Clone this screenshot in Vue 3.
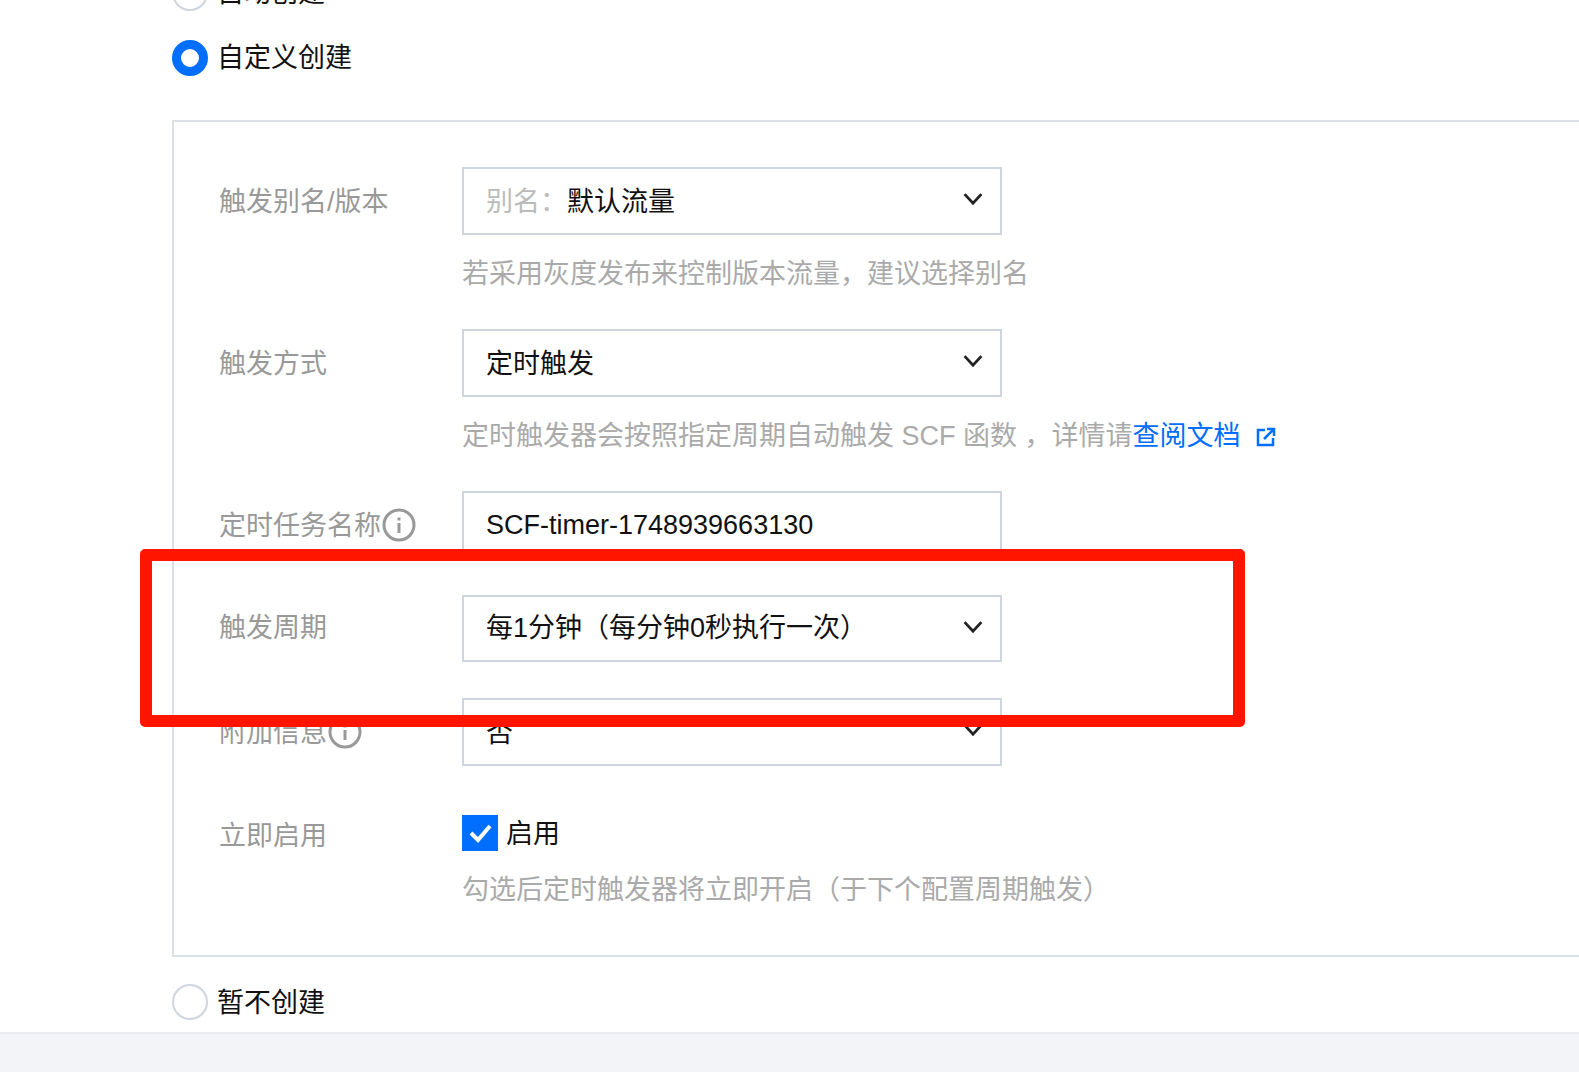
<script setup>
const chevron = 'M1 1.5 L7 8 L13 1.5'
</script>

<template>
  <div class="page">
    <main class="panel">
      <label class="radio-line first"><span class="radio"></span><span class="radio-text">自动创建</span></label>
      <label class="radio-line second"><span class="radio on"></span><span class="radio-text">自定义创建</span></label>

      <section class="box">
        <div class="row">
          <div class="label">触发别名/版本</div>
          <div class="control">
            <div class="select">
              <span><span class="prefix">别名：</span>默认流量</span>
              <svg class="chev" viewBox="0 0 14 10"><path :d="chevron" /></svg>
            </div>
            <p class="help">若采用灰度发布来控制版本流量，建议选择别名</p>
          </div>
        </div>

        <div class="row">
          <div class="label">触发方式</div>
          <div class="control">
            <div class="select">
              <span>定时触发</span>
              <svg class="chev" viewBox="0 0 14 10"><path :d="chevron" /></svg>
            </div>
            <p class="help">
              定时触发器会按照指定周期自动触发 SCF 函数 ，详情请<a class="link">查阅文档</a>
              <svg class="ext" viewBox="0 0 20 20"><path d="M9 3 H2 V18 H17 V11 M8 12 L17.500 2.500 M11 2 H18 V9" /></svg>
            </p>
          </div>
        </div>

        <div class="row">
          <div class="label">定时任务名称<svg class="info" viewBox="0 0 34 34"><circle cx="17" cy="17" r="15" /><path d="M17 9.500 V12.500 M17 15 V25" /></svg></div>
          <div class="control">
            <div class="select input"><span>SCF-timer-1748939663130</span></div>
          </div>
        </div>

        <div class="row row-tight">
          <div class="label">触发周期</div>
          <div class="control">
            <div class="select">
              <span>每1分钟（每分钟0秒执行一次）</span>
              <svg class="chev" viewBox="0 0 14 10"><path :d="chevron" /></svg>
            </div>
          </div>
        </div>

        <div class="row">
          <div class="label">附加信息<svg class="info" viewBox="0 0 34 34"><circle cx="17" cy="17" r="15" /><path d="M17 9.500 V12.500 M17 15 V25" /></svg></div>
          <div class="control">
            <div class="select">
              <span>否</span>
              <svg class="chev" viewBox="0 0 14 10"><path :d="chevron" /></svg>
            </div>
          </div>
        </div>

        <div class="row check-row">
          <div class="label">立即启用</div>
          <div class="control">
            <label class="check-line">
              <span class="check"><svg viewBox="0 0 36 36"><path d="M9 18 L16 25 L28 11" /></svg></span>
              <span class="check-text">启用</span>
            </label>
            <p class="help">勾选后定时触发器将立即开启（于下个配置周期触发）</p>
          </div>
        </div>
      </section>

      <label class="radio-line third"><span class="radio"></span><span class="radio-text">暂不创建</span></label>
    </main>
    <footer class="foot"></footer>
    <div class="highlight"></div>
  </div>
</template>

<style>
html, body { margin: 0; background: #fff; overflow: hidden; }
</style>

<style scoped>
.page {
  position: relative;
  width: 1579px;
  height: 1072px;
  overflow: hidden;
  background: #fff;
  font-family: "Liberation Sans", "Noto Sans CJK SC", sans-serif;
  font-size: 27px;
  color: #111;
}
.panel {
  display: flow-root;
  height: 1032px;
  padding-left: 172px;
  box-sizing: border-box;
}
.first { margin-top: -25px; }
.foot {
  height: 40px;
  border-top: 2px solid #e9ebf0;
  background: #f3f4f7;
  box-sizing: border-box;
}
.radio-line {
  display: flex;
  align-items: center;
  gap: 9px;
  height: 36px;
  line-height: 36px;
}
.third .radio-text { padding-top: 1px; }
.second { margin-top: 29px; }
.third { margin-top: 27px; }
.radio {
  flex: none;
  width: 36px;
  height: 36px;
  box-sizing: border-box;
  border: 2px solid #cfd5de;
  border-radius: 50%;
  background: #fff;
}
.radio.on { border: 9px solid #006eff; }
.box {
  box-sizing: border-box;
  width: 1500px;
  height: 837px;
  margin-top: 44px;
  padding: 45px 0 0 45px;
  border: 2px solid #dcdfe4;
}
.row {
  display: flex;
  margin-bottom: 36px;
}
.label {
  flex: none;
  width: 243px;
  height: 68px;
  box-sizing: border-box;
  padding-bottom: 4px;
  display: flex;
  align-items: center;
  color: #999;
}
.select {
  width: 540px;
  height: 68px;
  box-sizing: border-box;
  padding: 0 17px 4px 22px;
  border: 2px solid #cfd5de;
  display: flex;
  align-items: center;
  justify-content: space-between;
  background: #fff;
}
.input { padding-bottom: 0; }
.row-tight .select { height: 67px; padding-bottom: 6px; }
.row-tight .chev { margin-top: 3px; }
.row-tight .label { height: 67px; padding-bottom: 6px; }
.prefix { color: #bbb; }
.chev { width: 20px; height: 14px; fill: none; stroke: #222; stroke-width: 2; }
.help {
  margin: 19px 0 -1px;
  line-height: 40px;
  color: #aaa;
  white-space: nowrap;
}
.link { color: #006eff; }
.ext { width: 20px; height: 20px; margin-left: 15px; fill: none; stroke: #006eff; stroke-width: 2.500; vertical-align: -2px; }
.info { width: 34px; height: 34px; margin: 4px 0 0 1px; fill: none; stroke: #999; stroke-width: 3; flex: none; }
.check-row .label { height: 66px; }
.check-line {
  display: flex;
  align-items: center;
  gap: 8px;
  height: 60px;
  margin-top: 1px;
}
.check-text { padding-bottom: 4px; }
.check { width: 36px; height: 36px; background: #006eff; display: block; }
.check svg { display: block; fill: none; stroke: #fff; stroke-width: 4; }
.check-row .help { margin-top: 7px; }
.highlight {
  position: absolute;
  left: 140px;
  top: 549px;
  width: 1105px;
  height: 178px;
  box-sizing: border-box;
  border: 12px solid #ff1500;
  border-radius: 5px;
}
</style>
